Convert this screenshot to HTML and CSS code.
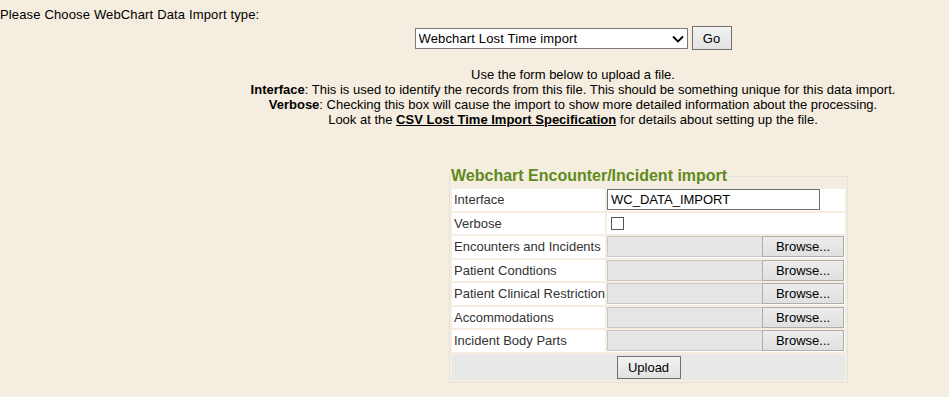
FILE: index.html
```
<!DOCTYPE html>
<html>
<head>
	<title>WebChart Data Import</title>
	<meta charset="utf-8">
	<link rel="stylesheet" href="styles.css">
</head>
<body>
  <div class="page">
    <p class="prompt">Please Choose WebChart Data Import type:</p>

    <form class="chooser" onsubmit="return false;">
      <span class="select-wrap">
        <select class="type-select">
          <option>Webchart Lost Time import</option>
        </select>
        <svg class="chevron" width="12" height="8" viewBox="0 0 12 8"><path d="M1 1.5 L6 6.5 L11 1.5" fill="none" stroke="#000" stroke-width="1.8"/></svg>
      </span>
      <button class="btn go">Go</button>
    </form>

    <div class="help">
      Use the form below to upload a file.<br>
      <b>Interface</b>: This is used to identify the records from this file. This should be something unique for this data import.<br>
      <b>Verbose</b>: Checking this box will cause the import to show more detailed information about the processing.<br>
      Look at the <a href="#">CSV Lost Time Import Specification</a> for details about setting up the file.
    </div>

    <fieldset class="upload">
      <legend>Webchart Encounter/Incident import</legend>
      <table class="fields">
        <tr>
          <td class="label">Interface</td>
          <td class="value"><input type="text" class="text-input" value="WC_DATA_IMPORT"></td>
        </tr>
        <tr>
          <td class="label">Verbose</td>
          <td class="value"><span class="checkbox"></span></td>
        </tr>
        <tr>
          <td class="label">Encounters and Incidents</td>
          <td class="value"><div class="file"><span class="file-name"></span><button class="btn browse">Browse...</button></div></td>
        </tr>
        <tr>
          <td class="label">Patient Condtions</td>
          <td class="value"><div class="file"><span class="file-name"></span><button class="btn browse">Browse...</button></div></td>
        </tr>
        <tr>
          <td class="label">Patient Clinical Restriction</td>
          <td class="value"><div class="file"><span class="file-name"></span><button class="btn browse">Browse...</button></div></td>
        </tr>
        <tr>
          <td class="label">Accommodations</td>
          <td class="value"><div class="file"><span class="file-name"></span><button class="btn browse">Browse...</button></div></td>
        </tr>
        <tr>
          <td class="label">Incident Body Parts</td>
          <td class="value"><div class="file"><span class="file-name"></span><button class="btn browse">Browse...</button></div></td>
        </tr>
        <tr>
          <td class="submit-row" colspan="2"><button class="btn upload-btn">Upload</button></td>
        </tr>
      </table>
    </fieldset>
  </div>
</body>
</html>
```

FILE: styles.css
```
html {
	overflow: hidden;
}
body {
	margin: 0;
	background-color: #f5eddf;
	font-family: "Liberation Sans", Arial, sans-serif;
	font-size: 13px;
	color: #000;
}
.page {
	width: 1146px;
}
.prompt {
	margin: 0;
	padding-top: 7px;
	line-height: 15px;
	letter-spacing: 0.15px;
}
.chooser {
	display: flex;
	justify-content: center;
	align-items: center;
	gap: 4px;
	margin-top: 4px;
}
.select-wrap {
	position: relative;
	display: inline-block;
}
.type-select {
	appearance: none;
	-webkit-appearance: none;
	width: 273px;
	height: 21px;
	margin: 0;
	padding: 0 20px 0 3px;
	border: 1px solid #7a7a7a;
	border-radius: 0;
	background: #fff;
	font-family: "Liberation Sans", Arial, sans-serif;
	font-size: 13px;
	letter-spacing: 0.15px;
	color: #000;
}
.chevron {
	position: absolute;
	right: 4px;
	top: 7px;
	pointer-events: none;
}
.btn {
	font-family: "Liberation Sans", Arial, sans-serif;
	font-size: 13px;
	color: #000;
	background: linear-gradient(#f2f2f2, #e2e2e2);
	border: 1px solid #707070;
	border-radius: 0;
	padding: 0;
	margin: 0;
}
.go {
	width: 40px;
	height: 24px;
}
.help {
	text-align: center;
	margin-top: 17px;
	line-height: 15px;
}
.help a {
	color: #000;
	font-weight: bold;
	text-decoration: underline;
}
.upload {
	margin: 40px 0 0 449px;
	width: 397px;
	padding: 0;
	border: 1px solid #e4e2dc;
}
.upload legend {
	padding: 0 2px 0 1px;
	margin-left: 0;
	font-size: 16px;
	font-weight: bold;
	color: #5f8a1c;
	line-height: 18px;
}
.fields {
	width: 397px;
	border-spacing: 2px;
	margin: 2px 0 0 0;
}
.fields td {
	padding: 0;
	height: 21.5px;
}
.label {
	background: #fff;
	color: #333;
	width: 151px;
	padding-left: 2px !important;
	white-space: nowrap;
}
.value {
	background: #fff;
}
.text-input {
	display: block;
	box-sizing: border-box;
	width: 213px;
	height: 21px;
	margin: 0;
	padding: 0 3px;
	border: 1px solid #707070;
	font-family: "Liberation Sans", Arial, sans-serif;
	font-size: 13px;
	color: #000;
}
.checkbox {
	display: block;
	width: 11px;
	height: 11px;
	margin-left: 4px;
	border: 1px solid #555;
	background: #fff;
}
.file {
	display: flex;
	height: 21px;
}
.file-name {
	width: 154px;
	background: #e5e5e5;
	border: 1px solid #c8c8c8;
	border-right: none;
}
.browse {
	width: 82px;
	height: 21px;
	background: linear-gradient(#ececec, #e0e0e0);
	border: 1px solid #adadad;
}
.submit-row {
	background: #e8e8e8;
	text-align: center;
	height: 26px !important;
}
.upload-btn {
	width: 64px;
	height: 23px;
	margin-top: 1px;
}
```
